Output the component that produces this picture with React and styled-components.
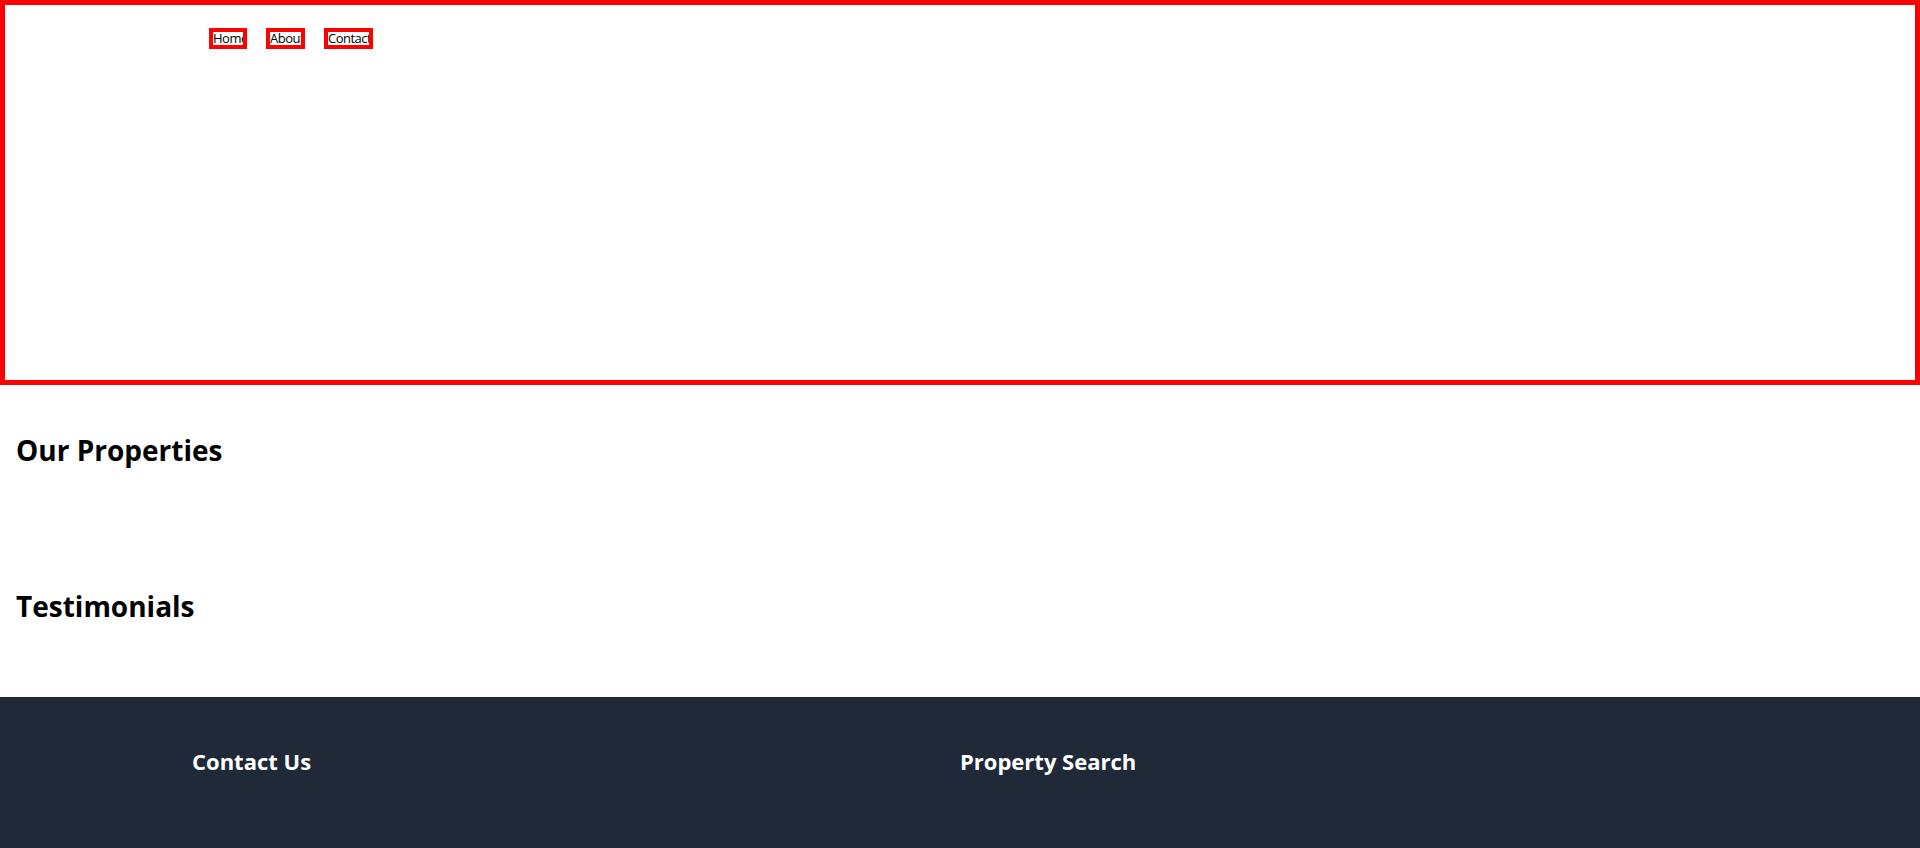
import React from 'react';
import styled, { createGlobalStyle } from 'styled-components';

const GlobalStyle = createGlobalStyle`
    html, body {
        margin: 0;
        padding: 0;
        background: #fff;
        font-family: "Open Sans", "Noto Sans", sans-serif;
        color: #000;
    }
    * {
        box-sizing: border-box;
    }
`;

const navLinks = [
    {label: 'Home', width: 38},
    {label: 'About', width: 39},
    {label: 'Contact', width: 49},
];

export default function App() {
    return (
        <>
            <GlobalStyle />
            <Header>
                <Container>
                    <Nav>
                        {navLinks.map(link => (
                            <NavLink key={link.label} href='#' $width={link.width}>{link.label}</NavLink>
                        ))}
                    </Nav>
                </Container>
            </Header>
            <Section>
                <Title>Our Properties</Title>
                <Grid />
            </Section>
            <Section>
                <Title>Testimonials</Title>
                <Grid />
            </Section>
            <Footer>
                <FooterGrid>
                    <FooterCol>
                        <FooterTitle>Contact Us</FooterTitle>
                        <FooterBody />
                    </FooterCol>
                    <FooterCol>
                        <FooterTitle>Property Search</FooterTitle>
                        <FooterBody />
                    </FooterCol>
                </FooterGrid>
            </Footer>
        </>
    );
}

const Header = styled.header`
    height: 385px;
    border: 5px solid #ff0000;
`;

const Container = styled.div`
    max-width: 1536px;
    margin: 0 auto;
    padding: 23px 17px 0;
`;

const Nav = styled.nav`
    display: flex;
    gap: 19px;
`;

const NavLink = styled.a`
    display: block;
    width: ${props => props.$width}px;
    height: 21px;
    border: 4px solid #ff0000;
    overflow: hidden;
    white-space: nowrap;
    font-size: 13px;
    line-height: 12px;
    letter-spacing: -0.5px;
    color: #000;
    text-decoration: none;
`;

const Section = styled.section`
    padding: 48px 16px;
`;

const Title = styled.h2`
    margin: 0 0 24px;
    font-size: 28px;
    line-height: 35px;
    padding-bottom: 1px;
    font-weight: 700;
`;

const Grid = styled.div`
    display: grid;
    grid-template-columns: repeat(3, 1fr);
    gap: 24px;
`;

const Footer = styled.footer`
    background: #1f2937;
    color: #fff;
    padding: 48px 0;
`;

const FooterGrid = styled.div`
    max-width: 1536px;
    margin: 0 auto;
    display: grid;
    grid-template-columns: 1fr 1fr;
`;

const FooterCol = styled.div`
    display: flex;
    flex-direction: column;
`;

const FooterTitle = styled.h3`
    margin: 0 0 16px;
    font-size: 22px;
    line-height: 32px;
    font-weight: 700;
`;

const FooterBody = styled.div`
    min-height: 120px;
`;
